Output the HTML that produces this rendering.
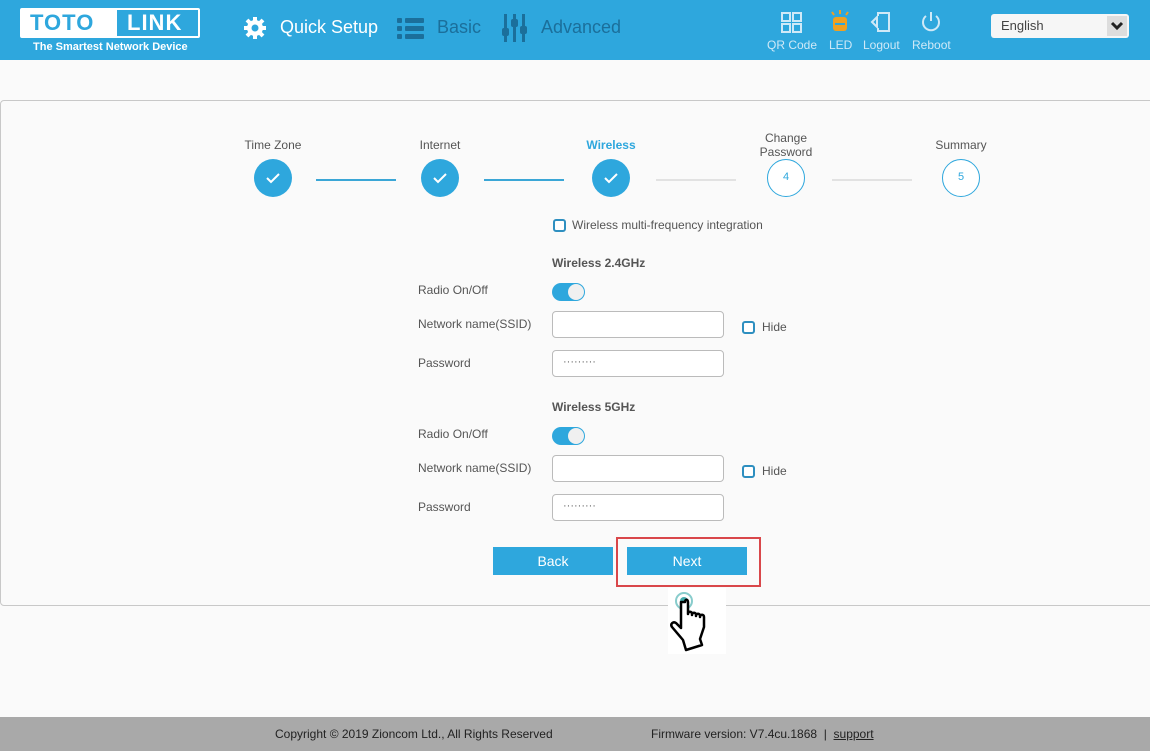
<!DOCTYPE html>
<html><head><meta charset="utf-8"><style>
*{margin:0;padding:0;box-sizing:border-box}
body{width:1150px;height:751px;background:#fafafa;font-family:"Liberation Sans",Arial,sans-serif;position:relative;overflow:hidden;color:#555}
.hdr{position:absolute;left:0;top:0;width:1150px;height:60px;background:#2ea7dd}
.abs{position:absolute}
.panel{position:absolute;left:0;top:100px;width:1160px;height:506px;border:1px solid #c8c8c8;border-radius:4px;background:#fafafa}
.c{position:absolute;width:38px;height:38px;border-radius:50%;top:159px}
.cf{background:#2ea7dd}
.co{border:1.5px solid #2ea7dd;background:#fff;color:#2ea7dd;font-size:11px;text-align:center;line-height:35px}
.lbl{position:absolute;font-size:12px;color:#555;text-align:center;width:120px}
.ln{position:absolute;top:179px;height:1.5px}
.f{font-size:12px;color:#555;position:absolute}
.inp{position:absolute;width:172px;height:27px;border:1px solid #bbb;border-radius:4px;background:#fff;font-size:11px;padding:5px 0 0 10px;color:#666;letter-spacing:0}
.cb{position:absolute;width:13px;height:13px;border:2px solid #2e8fc0;border-radius:3px;background:#fff}
.tg{position:absolute;width:33px;height:18px;border-radius:9px;background:#2ea7dd}
.tg:after{content:"";position:absolute;right:1px;top:1px;width:16px;height:16px;border-radius:50%;background:#f0f0f0}
.btn{position:absolute;width:120px;height:28px;background:#2ea7dd;color:#fff;font-size:14px;text-align:center;line-height:28px}
.foot{position:absolute;left:0;top:717px;width:1150px;height:34px;background:#a9a9a9;font-size:12px;color:#222}
</style></head><body>
<div class="hdr">
 <div class="abs" style="left:20px;top:8px;width:180px;height:30px;border:2px solid #fff;background:#fff;border-radius:2px"></div>
 <div class="abs" style="left:22px;top:10px;width:93px;height:26px;color:#2ea7dd;font:bold 22px 'Liberation Sans';letter-spacing:1px;line-height:26px;padding-left:8px">TOTO</div>
 <div class="abs" style="left:117px;top:10px;width:81px;height:26px;background:#2ea7dd;color:#fff;font:bold 22px 'Liberation Sans';letter-spacing:1px;line-height:26px;padding-left:10px">LINK</div>
 <div class="abs" style="left:33px;top:41px;color:#fff;font-size:11px;font-weight:bold">The Smartest Network Device</div>
 <svg class="abs" style="left:243px;top:16px" width="24" height="24" viewBox="0 0 24 24"><g fill="#fff"><circle cx="12" cy="12" r="8"/><g stroke="#fff" stroke-width="4"><line x1="12" y1="1" x2="12" y2="23"/><line x1="1" y1="12" x2="23" y2="12"/><line x1="4" y1="4" x2="20" y2="20"/><line x1="20" y1="4" x2="4" y2="20"/></g></g><circle cx="12" cy="12" r="3.5" fill="#2ea7dd"/></svg>
 <div class="abs" style="left:280px;top:17px;color:#fff;font-size:18px">Quick Setup</div>
 <svg class="abs" style="left:397px;top:17px" width="28" height="22"><g fill="#1b6f9b"><rect x="0" y="1" width="5" height="5" rx="1"/><rect x="0" y="9" width="5" height="5" rx="1"/><rect x="0" y="17" width="5" height="5" rx="1"/><rect x="8" y="1" width="19" height="5" rx="1"/><rect x="8" y="9" width="19" height="5" rx="1"/><rect x="8" y="17" width="19" height="5" rx="1"/></g></svg>
 <div class="abs" style="left:437px;top:17px;color:#1b6f9b;font-size:18px">Basic</div>
 <svg class="abs" style="left:502px;top:14px" width="26" height="28"><g fill="#1b6f9b"><rect x="2" y="0" width="3" height="28"/><rect x="11" y="0" width="3" height="28"/><rect x="20" y="0" width="3" height="28"/><rect x="0" y="14" width="7" height="8" rx="2"/><rect x="9" y="5" width="7" height="8" rx="2"/><rect x="18" y="12" width="7" height="8" rx="2"/></g></svg>
 <div class="abs" style="left:541px;top:17px;color:#1b6f9b;font-size:18px">Advanced</div>
 <svg class="abs" style="left:781px;top:12px" width="22" height="22"><g fill="none" stroke="#cfe9f7" stroke-width="2"><rect x="1" y="1" width="8" height="8"/><rect x="12" y="1" width="8" height="8"/><rect x="1" y="12" width="8" height="8"/><path d="M12 12h8v8h-8z"/></g></svg>
 <svg class="abs" style="left:829px;top:10px" width="22" height="24"><g stroke="#f0a020" stroke-width="2" fill="none"><line x1="11" y1="0" x2="11" y2="4"/><line x1="3" y1="2" x2="5" y2="5"/><line x1="19" y1="2" x2="17" y2="5"/></g><rect x="4" y="7" width="14" height="14" rx="3" fill="#f0a020"/><line x1="6" y1="14" x2="16" y2="14" stroke="#2ea7dd" stroke-width="2"/></svg>
 <svg class="abs" style="left:870px;top:12px" width="22" height="22"><g fill="none" stroke="#cfe9f7" stroke-width="2"><path d="M8 4V1h11v18H8v-3"/><path d="M2 10l5-5v10z"/></g></svg>
 <svg class="abs" style="left:920px;top:11px" width="22" height="22"><g fill="none" stroke="#cfe9f7" stroke-width="2"><path d="M6 5a8 8 0 1 0 10 0"/><line x1="11" y1="1" x2="11" y2="10"/></g></svg>
 <div class="abs" style="left:767px;top:38px;color:#cfe9f7;font-size:12px">QR Code</div>
 <div class="abs" style="left:829px;top:38px;color:#cfe9f7;font-size:12px">LED</div>
 <div class="abs" style="left:863px;top:38px;color:#cfe9f7;font-size:12px">Logout</div>
 <div class="abs" style="left:912px;top:38px;color:#cfe9f7;font-size:12px">Reboot</div>
 <div class="abs" style="left:991px;top:14px;width:138px;height:24px;background:#f6f6f6;border-radius:3px;font-size:13px;color:#444;padding:4px 0 0 10px">English
  <div class="abs" style="right:2px;top:2px;width:20px;height:20px;background:#ddd;text-align:center"><svg width="14" height="14" viewBox="0 0 14 14" style="margin-top:3px"><path d="M2 4l5 5 5-5" stroke="#222" stroke-width="3" fill="none"/></svg></div></div>
</div>

<div class="panel"></div>
<div class="lbl" style="left:213px;top:138px">Time Zone</div>
<div class="lbl" style="left:380px;top:138px">Internet</div>
<div class="lbl" style="left:551px;top:138px;color:#2ea7dd;font-weight:bold">Wireless</div>
<div class="lbl" style="left:726px;top:131px;line-height:14px">Change<br>Password</div>
<div class="lbl" style="left:901px;top:138px">Summary</div>
<div class="ln" style="left:316px;width:80px;background:#3aa6d6"></div>
<div class="ln" style="left:484px;width:80px;background:#3aa6d6"></div>
<div class="ln" style="left:656px;width:80px;background:#e2e2e2"></div>
<div class="ln" style="left:832px;width:80px;background:#e2e2e2"></div>
<div class="c cf" style="left:254px"><svg width="38" height="38"><path d="M13 19l4 4 8-8" stroke="#fff" stroke-width="2" fill="none"/></svg></div>
<div class="c cf" style="left:421px"><svg width="38" height="38"><path d="M13 19l4 4 8-8" stroke="#fff" stroke-width="2" fill="none"/></svg></div>
<div class="c cf" style="left:592px"><svg width="38" height="38"><path d="M13 19l4 4 8-8" stroke="#fff" stroke-width="2" fill="none"/></svg></div>
<div class="c co" style="left:767px">4</div>
<div class="c co" style="left:942px">5</div>

<div class="cb" style="left:553px;top:219px"></div>
<div class="f" style="left:572px;top:218px">Wireless multi-frequency integration</div>

<div class="f" style="left:552px;top:256px;font-weight:bold">Wireless 2.4GHz</div>
<div class="f" style="left:418px;top:283px">Radio On/Off</div>
<div class="tg" style="left:552px;top:283px"></div>
<div class="f" style="left:418px;top:317px">Network name(SSID)</div>
<div class="inp" style="left:552px;top:311px"></div>
<div class="cb" style="left:742px;top:321px"></div>
<div class="f" style="left:762px;top:320px">Hide</div>
<div class="f" style="left:418px;top:356px">Password</div>
<div class="inp" style="left:552px;top:350px">·········</div>

<div class="f" style="left:552px;top:400px;font-weight:bold">Wireless 5GHz</div>
<div class="f" style="left:418px;top:427px">Radio On/Off</div>
<div class="tg" style="left:552px;top:427px"></div>
<div class="f" style="left:418px;top:461px">Network name(SSID)</div>
<div class="inp" style="left:552px;top:455px"></div>
<div class="cb" style="left:742px;top:465px"></div>
<div class="f" style="left:762px;top:464px">Hide</div>
<div class="f" style="left:418px;top:500px">Password</div>
<div class="inp" style="left:552px;top:494px">·········</div>

<div class="btn" style="left:493px;top:547px">Back</div>
<div class="abs" style="left:616px;top:537px;width:145px;height:50px;border:2px solid #d9474a"></div>
<div class="btn" style="left:627px;top:547px">Next</div>

<div class="abs" style="left:668px;top:588px;width:58px;height:66px;background:#fff"></div>
<svg class="abs" style="left:670px;top:590px" width="56" height="64" viewBox="0 0 56 64"><circle cx="14" cy="11" r="8" fill="none" stroke="#8cc" stroke-width="2"/><circle cx="14" cy="11" r="4" fill="#4aa"/><path d="M11 12l0 26-5-5c-3-2-6 1-4 4l11 13 3 10 16-5-2-6 4-12 0-10c0-3-4-3-4 0v-1c0-3-4-3-4 0v-1c0-3-4-3-4 0v-1c0-3-4-3-4 0V12c0-3-3-3-3 0z" fill="#fff" stroke="#000" stroke-width="2.5" stroke-linejoin="round"/></svg>

<div class="foot">
 <div class="abs" style="left:275px;top:10px">Copyright © 2019 Zioncom Ltd., All Rights Reserved</div>
 <div class="abs" style="left:651px;top:10px">Firmware version: V7.4cu.1868 &nbsp;| &nbsp;<u>support</u></div>
</div>
</body></html>
